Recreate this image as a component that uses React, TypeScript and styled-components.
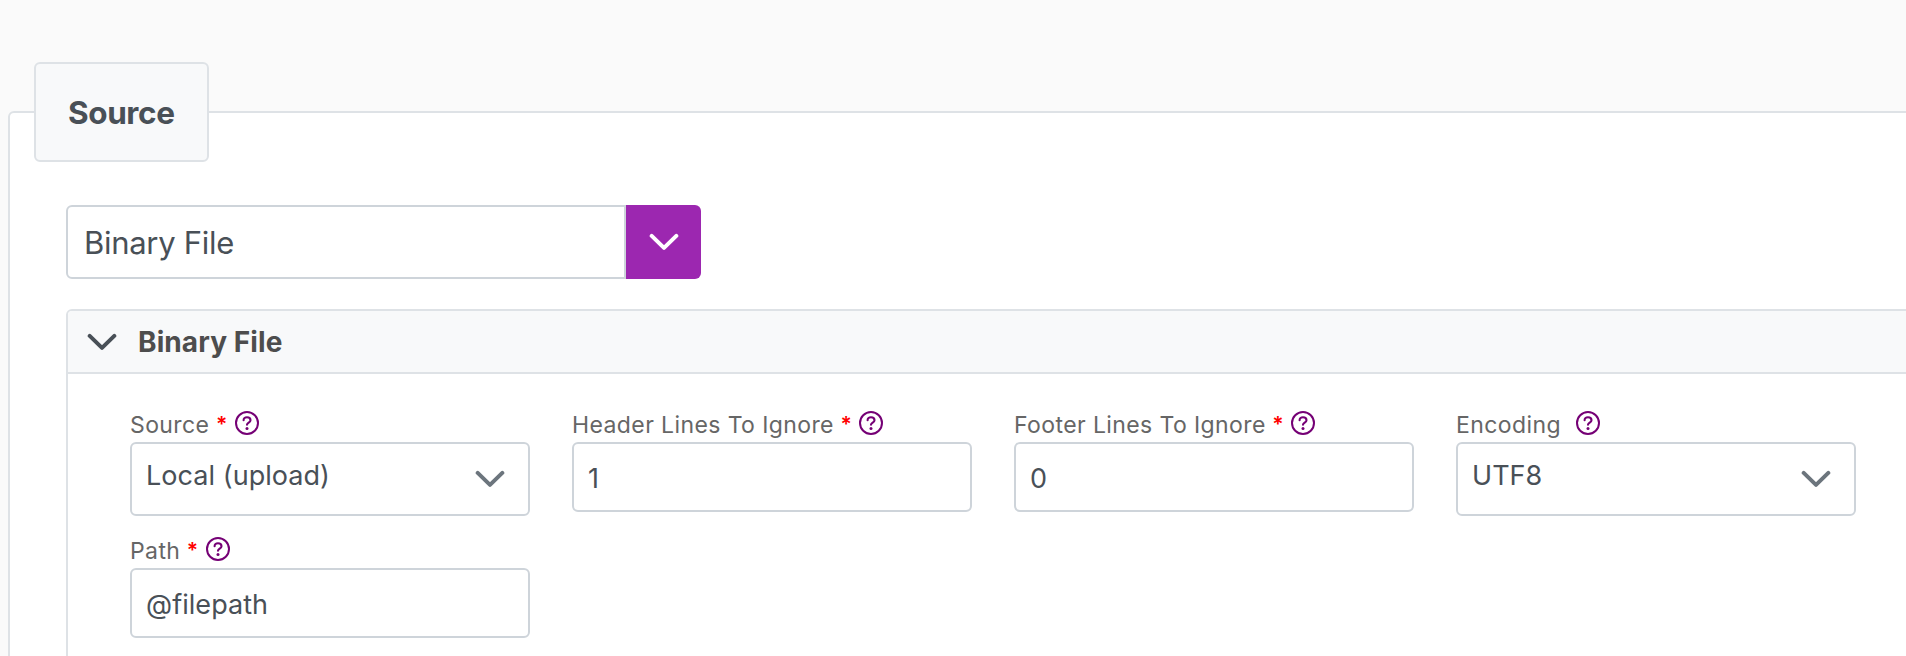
import React from "react";
import styled, { createGlobalStyle } from "styled-components";

const Global = createGlobalStyle`
  *, *::before, *::after { box-sizing: border-box; }
  html, body { margin: 0; padding: 0; background: #fafafa; overflow: hidden; }
  body { font-family: Inter, "Liberation Sans", sans-serif; font-weight: 400; color: #495057; }
`;

const Page = styled.main`
  height: 656px;
  padding: 111px 0 0 8px;
  overflow: hidden;
`;

const Fieldset = styled.section`
  width: 1990px;
  height: 700px;
  padding: 0 0 0 56px;
  border: 2px solid #dee2e6;
  border-radius: 6px;
  background: #fff;
`;

const Legend = styled.h2`
  display: flex;
  align-items: center;
  width: 175px;
  height: 100px;
  margin: -51px 0 43px -32px;
  padding: 0 0 0 32px;
  border: 2px solid #dee2e6;
  border-radius: 6px;
  background: #f8f9fa;
  font-size: 31.5px;
  font-weight: 700;
  letter-spacing: -0.4px;
`;

const Combo = styled.div`
  display: flex;
  width: 635px;
  height: 74px;
  margin-bottom: 30px;
`;

const ComboText = styled.div`
  display: flex;
  align-items: center;
  flex: 1;
  padding: 0 16px 0 16px;
  border: 2px solid #ced4da;
  border-radius: 6px 0 0 6px;
  font-size: 31px;
  letter-spacing: -0.3px;
`;

const ComboButton = styled.button`
  display: flex;
  align-items: center;
  justify-content: center;
  width: 75px;
  padding: 0;
  border: 0;
  border-radius: 0 6px 6px 0;
  background: #9c27b0;
  color: #fff;
`;

const Panel = styled.section`
  height: 500px;
  border: 2px solid #dee2e6;
  border-radius: 6px;
`;

const PanelHeader = styled.header`
  display: flex;
  align-items: center;
  gap: 21px;
  height: 63px;
  padding-left: 19px;
  border-bottom: 2px solid #dee2e6;
  border-radius: 4px 4px 0 0;
  background: #f8f9fa;
`;

const PanelTitle = styled.h3`
  margin: 0;
  color: #4d4d4d;
  font-size: 28px;
  font-weight: 700;
  letter-spacing: 0.1px;
`;

const Fields = styled.div`
  display: grid;
  grid-template-columns: repeat(4, 400px);
  column-gap: 42px;
  row-gap: 18px;
  padding: 34px 0 0 62px;
`;

const Field = styled.div`
  display: flex;
  flex-direction: column;
`;

const Label = styled.div`
  display: flex;
  align-items: center;
  height: 34px;
  color: #666;
  font-size: 23px;
`;

const LabelText = styled.span`
  letter-spacing: 0.4px;
  white-space: nowrap;
`;

const Star = styled.span`
  width: 11px;
  margin: -1px 0 0 6.5px;
  color: #f00;
  font-size: 21px;
  font-weight: 600;
`;

const HelpIcon = styled.svg<{ $gap: number }>`
  margin: -5px 0 0 ${(p) => p.$gap}px;
`;

const Control = styled.div<{ $select?: boolean }>`
  display: flex;
  align-items: center;
  justify-content: space-between;
  height: ${(p) => (p.$select ? 74 : 70)}px;
  padding: ${(p) => (p.$select ? "0 23px 0 14px" : "2px 14px 0")};
  border: 2px solid #ced4da;
  border-radius: 6px;
  font-size: 27px;
  letter-spacing: 0.05px;
`;

const Value = styled.span<{ $lift?: boolean }>`
  padding-bottom: ${(p) => (p.$lift ? 8 : 0)}px;
`;

function Chevron({ color = "currentColor" }: { color?: string }) {
  return (
    <svg width="30" height="18" viewBox="0 0 30 18" fill="none">
      <path d="M2.7 2.9 15 14.9 27.3 2.9" stroke={color} strokeWidth="4" strokeLinecap="round" strokeLinejoin="round" />
    </svg>
  );
}

function Help({ gap }: { gap: number }) {
  return (
    <HelpIcon $gap={gap} width="24" height="24" viewBox="0 0 24 24" fill="none">
      <circle cx="12" cy="12" r="11" stroke="#750075" strokeWidth="2" />
      <path d="M8.6 9.2C8.6 7.4 9.9 6.3 12 6.3s3.5 1.2 3.5 2.9c0 2.3-3.5 2.5-3.5 4.6" stroke="#750075" strokeWidth="2.1" strokeLinecap="round" />
      <circle cx="12" cy="17.4" r="1.5" fill="#750075" />
    </HelpIcon>
  );
}

type FieldData = { label: string; value: string; required?: boolean; select?: boolean };

const fields: FieldData[] = [
  { label: "Source", value: "Local (upload)", required: true, select: true },
  { label: "Header Lines To Ignore", value: "1", required: true },
  { label: "Footer Lines To Ignore", value: "0", required: true },
  { label: "Encoding", value: "UTF8", select: true },
  { label: "Path", value: "@filepath", required: true },
];

export default function App() {
  return (
    <>
      <Global />
      <Page>
        <Fieldset>
          <Legend>Source</Legend>
          <Combo>
            <ComboText>Binary File</ComboText>
            <ComboButton aria-label="Choose source type"><Chevron /></ComboButton>
          </Combo>
          <Panel>
            <PanelHeader>
              <Chevron />
              <PanelTitle>Binary File</PanelTitle>
            </PanelHeader>
            <Fields>
              {fields.map((f) => (
                <Field key={f.label}>
                  <Label>
                    <LabelText>{f.label}</LabelText>
                    {f.required && <Star>*</Star>}
                    <Help gap={f.required ? 8 : 15} />
                  </Label>
                  <Control $select={f.select}>
                    <Value $lift={f.select}>{f.value}</Value>
                    {f.select && <Chevron color="#6c757d" />}
                  </Control>
                </Field>
              ))}
            </Fields>
          </Panel>
        </Fieldset>
      </Page>
    </>
  );
}
